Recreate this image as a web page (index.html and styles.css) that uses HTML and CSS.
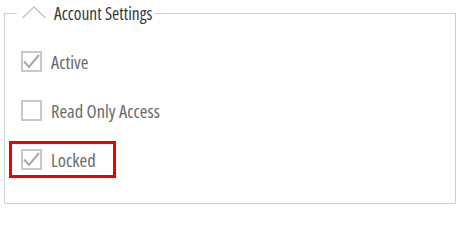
FILE: index.html
```html
<!DOCTYPE html>
<html>
<head>
<meta charset="utf-8">
<link rel="stylesheet" href="styles.css">
</head>
<body>
<fieldset class="panel">
  <legend class="panel-title">
    <svg class="chevron" width="24" height="13" viewBox="0 0 24 13"><polyline points="0.5,12 12,1 23.5,12" fill="none" stroke="#c4c4c4" stroke-width="1.3"/></svg>
    <span class="title-text">Account Settings</span>
  </legend>
  <div class="rows">
    <label class="row">
      <svg class="box" width="21" height="21" viewBox="0 0 21 21"><rect x="1" y="1" width="19" height="19" fill="#fff" stroke="#c8c8c8" stroke-width="2"/><polyline points="3,10.5 8,16 18,4" fill="none" stroke="#a8a8a8" stroke-width="2"/></svg>
      <span class="label">Active</span>
    </label>
    <label class="row">
      <svg class="box" width="21" height="21" viewBox="0 0 21 21"><rect x="1" y="1" width="19" height="19" fill="#fff" stroke="#c8c8c8" stroke-width="2"/></svg>
      <span class="label">Read Only Access</span>
    </label>
    <label class="row row-error">
      <svg class="box" width="21" height="21" viewBox="0 0 21 21"><rect x="1" y="1" width="19" height="19" fill="#fff" stroke="#c8c8c8" stroke-width="2"/><polyline points="3,10.5 8,16 18,4" fill="none" stroke="#a8a8a8" stroke-width="2"/></svg>
      <span class="label">Locked</span>
    </label>
  </div>
</fieldset>
</body>
</html>
```
FILE: styles.css
```css
html, body {
  margin: 0;
  padding: 0;
  background: #fff;
}
body {
  font-family: "Open Sans", "Roboto", sans-serif;
  font-stretch: 75%;
}
.panel {
  margin: 3px 2px 0 4px;
  border: 1px solid #cfcfcf;
  padding: 0 0 0 4px;
  box-sizing: border-box;
  height: 201px;
  width: 452px;
}
.panel-title {
  margin-left: 8px;
  padding: 0 3px 0 5px;
  height: 20px;
  display: flex;
  align-items: center;
  gap: 8px;
}
.chevron {
  display: block;
  margin-top: -2px;
}
.title-text {
  font-size: 17.5px;
  color: #3a3a3a;
  line-height: 20px;
}
.rows {
  display: flex;
  flex-direction: column;
  align-items: flex-start;
  gap: 12px;
  padding-top: 20px;
}
.row {
  display: inline-flex;
  align-items: center;
  gap: 9px;
  border: 3px solid transparent;
  padding: 5px 17px 5px 9px;
}
.row-error {
  border-color: #ee0000;
}
.box {
  display: block;
  flex: none;
}
.label {
  font-size: 18.5px;
  color: #6a6a6a;
  line-height: 21px;
}
```
